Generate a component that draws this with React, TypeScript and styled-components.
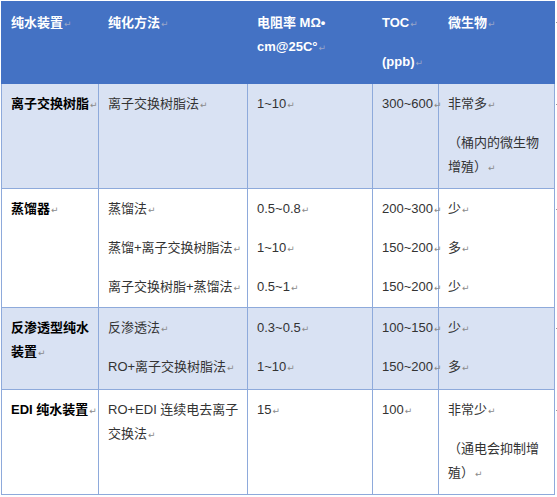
import React from "react";
import styled, { createGlobalStyle } from "styled-components";

const Global = createGlobalStyle`
  html, body { margin: 0; padding: 0; background: #ffffff; }
  body { font-family: "Liberation Sans", "Noto Sans CJK SC", sans-serif; }
`;

const Table = styled.table`
  border-collapse: collapse;
  table-layout: fixed;
  width: 556px;
  margin: 1px 0 0 1px;
  font-size: 13px;
`;

const HeadRow = styled.tr`
  background: #4472c4;
`;

const BodyRow = styled.tr<{ $shade: boolean }>`
  background: ${(p) => (p.$shade ? "#d9e2f3" : "#ffffff")};
`;

const HeadCell = styled.th<{ $h: number }>`
  height: ${(p) => p.$h}px;
  box-sizing: border-box;
  padding: 9px 2px 0 9px;
  vertical-align: top;
  text-align: left;
  color: #ffffff;
  font-weight: 700;
  border: 1px solid #4472c4;
`;

const Cell = styled.td<{ $h: number; $strong?: boolean }>`
  height: ${(p) => p.$h}px;
  box-sizing: border-box;
  padding: 8px 2px 0 9px;
  vertical-align: top;
  color: ${(p) => (p.$strong ? "#000000" : "#333333")};
  font-weight: ${(p) => (p.$strong ? 700 : 400)};
  border: 1px solid #8eaadb;
`;

const EndCell = styled.td`
  padding: 0;
  border: none;
  background: #ffffff;
  vertical-align: top;
  position: relative;
`;

const EndTick = styled.span`
  position: absolute;
  left: 1px;
  top: 20px;
  width: 2px;
  height: 1px;
  background: #999999;
`;

const Para = styled.p`
  margin: 0 0 14px 0;
  line-height: 24px;
  white-space: nowrap;
  &:last-child { margin-bottom: 0; }
`;

const Mark = styled.span<{ $light?: boolean }>`
  font-family: "DejaVu Sans", sans-serif;
  font-weight: 400;
  font-size: 9px;
  color: ${(p) => (p.$light ? "#9aa6c8" : "#8a8a8a")};
  margin-left: 1px;
`;

type P = string[];
type RowData = {
  name: P;
  methods: P[];
  res: P[];
  toc: P[];
  micro: P[];
  h: number;
  shade: boolean;
};

const rows: RowData[] = [
  {
    name: ["离子交换树脂"],
    methods: [["离子交换树脂法"]],
    res: [["1~10"]],
    toc: [["300~600"]],
    micro: [["非常多"], ["（桶内的微生物", "增殖）"]],
    h: 105,
    shade: true,
  },
  {
    name: ["蒸馏器"],
    methods: [["蒸馏法"], ["蒸馏+离子交换树脂法"], ["离子交换树脂+蒸馏法"]],
    res: [["0.5~0.8"], ["1~10"], ["0.5~1"]],
    toc: [["200~300"], ["150~200"], ["150~200"]],
    micro: [["少"], ["多"], ["少"]],
    h: 119,
    shade: false,
  },
  {
    name: ["反渗透型纯水", "装置"],
    methods: [["反渗透法"], ["RO+离子交换树脂法"]],
    res: [["0.3~0.5"], ["1~10"]],
    toc: [["100~150"], ["150~200"]],
    micro: [["少"], ["多"]],
    h: 82,
    shade: true,
  },
  {
    name: ["EDI 纯水装置"],
    methods: [["RO+EDI 连续电去离子", "交换法"]],
    res: [["15"]],
    toc: [["100"]],
    micro: [["非常少"], ["（通电会抑制增", "殖）"]],
    h: 105,
    shade: false,
  },
];

const Paragraph: React.FC<{ lines: P; light?: boolean }> = ({ lines, light }) => (
  <Para>
    {lines.map((l, i) => (
      <React.Fragment key={i}>
        {i > 0 && <br />}
        {l}
      </React.Fragment>
    ))}
    <Mark $light={light}>↵</Mark>
  </Para>
);

const Paras: React.FC<{ items: P[]; light?: boolean }> = ({ items, light }) => (
  <>
    {items.map((p, i) => (
      <Paragraph key={i} lines={p} light={light} />
    ))}
  </>
);

export default function App() {
  return (
    <>
      <Global />
      <Table>
        <colgroup>
          <col style={{ width: 97 }} />
          <col style={{ width: 149 }} />
          <col style={{ width: 125 }} />
          <col style={{ width: 66 }} />
          <col style={{ width: 116 }} />
          <col style={{ width: 3 }} />
        </colgroup>
        <thead>
          <HeadRow>
            <HeadCell $h={82}>
              <Paragraph lines={["纯水装置"]} light />
            </HeadCell>
            <HeadCell $h={82}>
              <Paragraph lines={["纯化方法"]} light />
            </HeadCell>
            <HeadCell $h={82}>
              <Paragraph lines={["电阻率 MΩ•", "cm@25C°"]} light />
            </HeadCell>
            <HeadCell $h={82}>
              <Paras items={[["TOC"], ["(ppb)"]]} light />
            </HeadCell>
            <HeadCell $h={82}>
              <Paragraph lines={["微生物"]} light />
            </HeadCell>
            <EndCell>
              <EndTick />
            </EndCell>
          </HeadRow>
        </thead>
        <tbody>
          {rows.map((r, i) => (
            <BodyRow key={i} $shade={r.shade}>
              <Cell $h={r.h} $strong>
                <Paragraph lines={r.name} />
              </Cell>
              <Cell $h={r.h}>
                <Paras items={r.methods} />
              </Cell>
              <Cell $h={r.h}>
                <Paras items={r.res} />
              </Cell>
              <Cell $h={r.h}>
                <Paras items={r.toc} />
              </Cell>
              <Cell $h={r.h}>
                <Paras items={r.micro} />
              </Cell>
              <EndCell>
                <EndTick />
              </EndCell>
            </BodyRow>
          ))}
        </tbody>
      </Table>
    </>
  );
}
